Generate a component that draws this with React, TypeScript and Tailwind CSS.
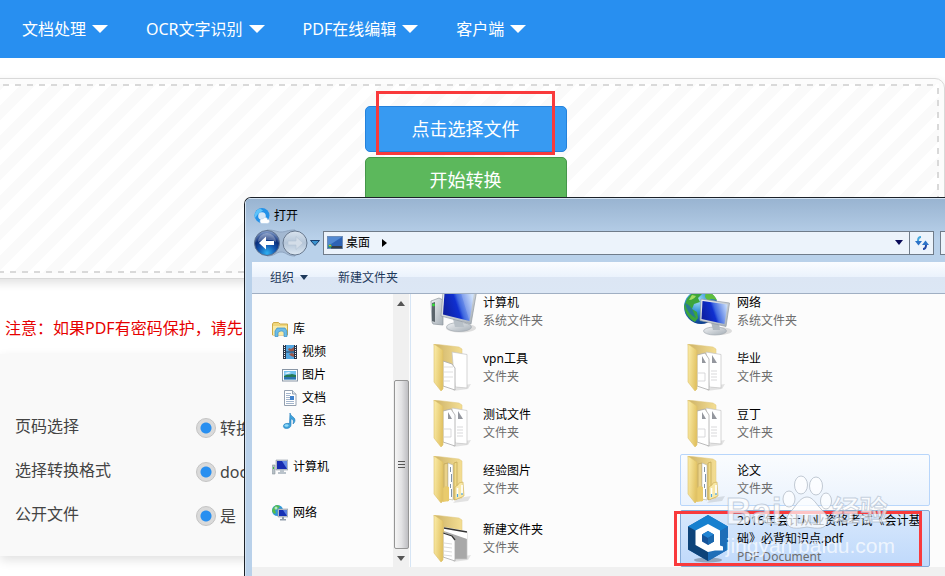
import React, { ReactNode } from "react";

const navItems = ["文档处理", "OCR文字识别", "PDF在线编辑", "客户端"];

const options = [
  { name: "pages", label: "页码选择", value: "转换" },
  { name: "format", label: "选择转换格式", value: "doc" },
  { name: "public", label: "公开文件", value: "是" },
];

function Caret() {
  return (
    <svg width="16" height="8" viewBox="0 0 16 8" aria-hidden="true">
      <path d="M0 0h16L8 8z" fill="#fff" />
    </svg>
  );
}

function SmallCaret({ color }: { color: string }) {
  return (
    <svg width="8" height="5" viewBox="0 0 8 5" aria-hidden="true">
      <path d="M0 0h8L4 5z" fill={color} />
    </svg>
  );
}

function BrowserIcon() {
  return (
    <svg width="16" height="16" viewBox="0 0 16 16" aria-hidden="true">
      <circle cx="8" cy="7.5" r="7.5" fill="#2492e8" />
      <path d="M1 10a7.5 7.5 0 0 1 5-9.500l3 2L4 6z" fill="#5dc3fa" />
      <circle cx="8" cy="8" r="3.800" fill="#d5e6f6" />
      <path d="M6 13c0-2 2-2.500 3-2 .5-2 4.500-2 4.500.5 2 0 2.500 1.500 2 2.500s-1.500 1.500-3 1.500H8c-1.500 0-2-1-2-2.500z" fill="#fff" stroke="#a9c9e8" strokeWidth=".5" />
    </svg>
  );
}

function BackForward() {
  return (
    <svg width="56" height="28" viewBox="0 0 56 28" aria-hidden="true">
      <defs>
        <radialGradient id="back" cx=".5" cy=".9" r=".9">
          <stop offset="0" stopColor="#2fb2f2" />
          <stop offset=".4" stopColor="#1354ad" />
          <stop offset=".65" stopColor="#0b2d78" />
          <stop offset="1" stopColor="#8fa9d3" />
        </radialGradient>
        <linearGradient id="fwd" x1="0" y1="0" x2="0" y2="1">
          <stop offset="0" stopColor="#d9e3ee" />
          <stop offset=".5" stopColor="#b4c5d8" />
          <stop offset="1" stopColor="#dde8f2" />
        </linearGradient>
      </defs>
      <path d="M14 1c9 0 9 2 14 2s6-2 14-2v26c-8 0-9-4-14-4s-6 4-14 4z" fill="#a3b8d1" stroke="#8fa5c0" />
      <circle cx="14" cy="14" r="12.500" fill="url(#back)" stroke="#5d708c" />
      <path d="M5 13a9 9 0 0 1 18 0c-4-3-14-3-18 0z" fill="#fff" opacity=".3" />
      <path d="M6 14l7-6.500v4.500h8v4h-8v4.500z" fill="#fff" />
      <circle cx="42" cy="14" r="12" fill="url(#fwd)" stroke="#66778d" />
      <path d="M50 14l-7-6.500v4.500h-8v4h8v4.500z" fill="#d3dde8" stroke="#b3c2d3" strokeWidth=".6" />
    </svg>
  );
}

function DesktopIcon() {
  return (
    <svg width="16" height="13" viewBox="0 0 16 13" aria-hidden="true">
      <rect x=".5" y=".5" width="15" height="12" fill="#2d62b4" stroke="#6c8db9" />
      <path d="M1 1h14L1 10z" fill="#5289d2" />
      <path d="M4 10h11v2.500H4z" fill="#333d49" />
      <circle cx="3" cy="10" r="1.800" fill="#39b35b" />
      <path d="M2 9h2v1H2z" fill="#ee9d34" />
    </svg>
  );
}

function RefreshIcon() {
  return (
    <svg width="14" height="14" viewBox="0 0 14 14" aria-hidden="true">
      <path d="M6 1C4 1 3 2.500 3 5" fill="none" stroke="#43a7de" strokeWidth="2" />
      <path d="M0 5h7L3.500 9.500z" fill="#2c73c8" />
      <path d="M8 13c2 0 3-1.500 3-4" fill="none" stroke="#2447a5" strokeWidth="2" />
      <path d="M7 9h7l-3.500-4.500z" fill="#2c73c8" />
    </svg>
  );
}

function LibraryIcon() {
  return (
    <svg width="16" height="16" viewBox="0 0 16 16" aria-hidden="true">
      <path d="M.5 14V3l1-1.500h5L8 3h7.500v11z" fill="#efd67b" stroke="#cfab48" />
      <path d="M1 5h14v9H1z" fill="#f8eaa6" />
      <path d="M3 15.500V10l2-3h8l2 3v5.500h-3V12c0-1-1-2-2.500-2S6 11 6 12v3.500z" fill="#6cbce7" stroke="#398fc5" strokeWidth=".7" />
    </svg>
  );
}

function VideoIcon() {
  return (
    <svg width="16" height="16" viewBox="0 0 16 16" aria-hidden="true">
      <rect x="1" y="1" width="14" height="14" fill="#293447" />
      <rect x="4" y="1" width="8" height="14" fill="#53a7e2" />
      <path d="M7 4l2 1 3-2v4L9 7.500 6 6zM7 10l3-1 2 1v3l-3-1z" fill="#9c5546" />
      <path d="M4 8h8" stroke="#263b59" />
      <path d="M2.500 1v14M13.500 1v14" stroke="#f1f5f8" strokeDasharray="1 1" />
    </svg>
  );
}

function PictureIcon() {
  return (
    <svg width="16" height="16" viewBox="0 0 16 16" aria-hidden="true">
      <rect x=".5" y="2.500" width="15" height="11.500" fill="#fff" stroke="#8996a5" />
      <rect x="2" y="4" width="12" height="8.500" fill="#73c3f0" />
      <path d="M2 9c3-2 5-1 8-2l4 1v2H2z" fill="#267a53" />
      <path d="M2 10h12v2.500H2z" fill="#2c75af" />
      <path d="M2 6l5-1 2 1-4 1z" fill="#e6f5ff" />
    </svg>
  );
}

function DocumentIcon() {
  return (
    <svg width="16" height="16" viewBox="0 0 16 16" aria-hidden="true">
      <path d="M2.500.5h8l3.500 3.500v11.500H2.500z" fill="#fff" stroke="#94a0b0" />
      <path d="M10.500.5V4H14" fill="#dde7ef" stroke="#94a0b0" />
      <path d="M4 3.500h5M4 5.500h4M4 7.500h4M4 9.500h4M4 11.500h8M4 13.500h8" stroke="#a3b5cc" />
      <rect x="8" y="6" width="4" height="4" fill="#3f80cb" />
    </svg>
  );
}

function MusicIcon() {
  return (
    <svg width="16" height="16" viewBox="0 0 16 16" aria-hidden="true">
      <path d="M8 0c0 3 5 4 5 7 0 2-1 3-2 4 1-4-.5-5-2-5v6c0 2-2 3.500-4.500 3.500S1 14 1.500 12.500 4 10 7.500 10.500z" fill="#3fa3dc" stroke="#1f78b8" strokeWidth=".6" />
      <ellipse cx="4.500" cy="12.500" rx="2" ry="1.300" fill="#96dcf8" />
    </svg>
  );
}

function MiniComputer() {
  return (
    <svg width="16" height="16" viewBox="0 0 16 16" aria-hidden="true">
      <path d="M.3 6h2.700v9H.3z" fill="#b7c1c7" stroke="#89949c" strokeWidth=".6" />
      <path d="M1 8h1v2H1z" fill="#38c43c" />
      <path d="M4 1h12v10H4z" fill="#c0c8d0" stroke="#8d98a4" strokeWidth=".6" />
      <path d="M5 2h10v8H5z" fill="#172bb0" />
      <path d="M10 2h5v8z" fill="#6389e6" />
      <path d="M8 11h4v2h2v2H6v-2h2z" fill="#bac3cb" />
    </svg>
  );
}

function MiniNetwork() {
  return (
    <svg width="16" height="16" viewBox="0 0 16 16" aria-hidden="true">
      <circle cx="5.500" cy="5.500" r="5.500" fill="#3098da" />
      <path d="M1 3l3-3 4 1-2 3-3 1 1 3-2 1-2-3z" fill="#55bd4c" />
      <circle cx="4" cy="3" r="1.500" fill="#cceef0" opacity=".8" />
      <path d="M6 4h10v8H6z" fill="#c0c8d0" stroke="#8d98a4" strokeWidth=".6" />
      <path d="M7 5h8v6H7z" fill="#1731b5" />
      <path d="M11 5h4v6z" fill="#5c82e0" />
      <path d="M10 12h2v2h2v1.500H8V14h2z" fill="#929eab" />
    </svg>
  );
}

function Defs() {
  return (
    <svg width="0" height="0" className="absolute" aria-hidden="true">
      <defs>
        <linearGradient id="flap" x1="0" y1="0" x2="1" y2=".3">
          <stop offset="0" stopColor="#fbedaa" />
          <stop offset="1" stopColor="#e3c465" />
        </linearGradient>
        <linearGradient id="backFlap" x1="0" y1="0" x2="1" y2="0">
          <stop offset="0" stopColor="#cdb268" />
          <stop offset="1" stopColor="#f4de93" />
        </linearGradient>
        <linearGradient id="screen" x1="0" y1=".6" x2="1" y2=".3">
          <stop offset="0" stopColor="#0e1fa0" />
          <stop offset=".45" stopColor="#0f2fd0" />
          <stop offset=".55" stopColor="#3f68e0" />
          <stop offset="1" stopColor="#c6dcfa" />
        </linearGradient>
        <linearGradient id="metal" x1="0" y1="0" x2="1" y2="1">
          <stop offset="0" stopColor="#f1f3f5" />
          <stop offset="1" stopColor="#a5aeb6" />
        </linearGradient>
        <radialGradient id="globe" cx=".4" cy=".3" r=".7">
          <stop offset="0" stopColor="#a9e4f8" />
          <stop offset=".5" stopColor="#2f8fd6" />
          <stop offset="1" stopColor="#0b3c8c" />
        </radialGradient>
      </defs>
    </svg>
  );
}

function ComputerIcon() {
  return (
    <svg width="48" height="48" viewBox="0 0 48 48" aria-hidden="true">
      <path d="M1 13l8-3 4 2v25l-10-1-1-2z" fill="url(#metal)" stroke="#8c959c" strokeWidth=".7" />
      <path d="M2 15l3-1v20l-3-1z" fill="#5b646b" />
      <circle cx="3.500" cy="17" r="1.400" fill="#35e03a" />
      <ellipse cx="31" cy="40" rx="15" ry="4.500" fill="#000" opacity=".12" />
      <ellipse cx="29" cy="39" rx="12.500" ry="4.500" fill="url(#metal)" stroke="#a3abb2" strokeWidth=".7" />
      <path d="M23 31h9l2 8h-9z" fill="#b8c0c7" />
      <path d="M13 4h33.500L41 36l-30-8z" fill="url(#metal)" stroke="#9099a2" strokeWidth=".7" />
      <path d="M14.500 5H44l-4.500 28L13 26.500z" fill="url(#screen)" />
      <path d="M31 5h13l-4.500 28z" fill="#fff" opacity=".15" />
    </svg>
  );
}

function NetworkIcon() {
  return (
    <svg width="48" height="48" viewBox="0 0 48 48" aria-hidden="true">
      <circle cx="17" cy="19" r="17" fill="url(#globe)" />
      <path d="M3 11c3-5 8-8 12-9l3 4-4 4 2 4-6 2-2 5 5 3 1 6-3 4C5 31 1 25 0 18z" fill="#3ca53c" />
      <path d="M22 3c5 1 9 5 11 9l-6-1-3 2-3-4z" fill="#5ebd3e" />
      <path d="M5 12c3 0 6-2 7-4l-4-1z" fill="#a5dd62" />
      <path d="M1 15c3 1 5 3 7 6s2 6 4 9c-5-2-10-8-11-15z" fill="#1f66b8" opacity=".7" />
      <ellipse cx="35" cy="43" rx="13" ry="4" fill="#000" opacity=".12" />
      <ellipse cx="31" cy="43" rx="11.500" ry="4" fill="url(#metal)" stroke="#a3abb2" strokeWidth=".7" />
      <path d="M27 34h8l1 8h-7z" fill="#aeb7bf" />
      <path d="M17 11l28.500 4L42 38.500l-26-6z" fill="url(#metal)" stroke="#9099a2" strokeWidth=".7" />
      <path d="M18.500 13l25 3.500L40.500 36l-23-5z" fill="url(#screen)" />
    </svg>
  );
}

type FolderKind = "plain" | "docs" | "nested" | "window";

function FolderIcon({ kind }: { kind: FolderKind }) {
  return (
    <svg width="48" height="48" viewBox="0 0 48 48" aria-hidden="true">
      <path d="M28 42l13-2-3 5-15 2z" fill="#000" opacity=".1" />
      <path d={kind === "nested" ? "M4 0l25 3 3 2v37l-19 2z" : "M4 0l25 3 3 2v12l-19 24z"} fill="url(#backFlap)" stroke="#dfc67c" strokeWidth=".5" />
      {kind === "nested" ? (
        <>
          <path d="M14 8l4-1v38l-4-2z" fill="#ead28a" stroke="#b79a4c" strokeWidth=".6" />
          <path d="M18 7l5 2v35l-5-1z" fill="#fff" stroke="#b5b5a8" strokeWidth=".6" />
          <path d="M20.500 11v5M21.500 18v8M20.500 28v4M21.500 33v8" stroke="#7f93a8" strokeWidth="1" />
          <path d="M24 7l3-1v37l-3 1z" fill="#f0d985" stroke="#b79a4c" strokeWidth=".6" />
          <path d="M25 31l3-2 1-2 4-1 1 14-9 4z" fill="#f8e8a7" stroke="#cbac54" strokeWidth=".6" />
          <path d="M27.500 32v9M32 29v9" stroke="#fff" strokeWidth="1.600" />
          <path d="M27.500 38v3M32 37v2" stroke="#4ba5df" strokeWidth="1.200" />
          <path d="M13 32l3-2 3 1v14l-6 1z" fill="#e9cb6c" />
        </>
      ) : (
        <>
          <path d={kind === "window" ? "M14 13l23 4v27H24z" : "M22 8l15 2.500V44l-12-1z"} fill={kind === "window" ? "#a8a8a8" : "#fff"} stroke="#c3c3c3" strokeWidth=".7" />
          {kind === "window" && <path d="M14 12l23 4v8l-23-8z" fill="#fff" />}
          {kind === "window" && <path d="M14 13l23 4" stroke="#333" strokeWidth="1.300" />}
          <path d={kind === "docs" ? "M13 11l8-2 4 6v31l-12-4z" : "M13 17l9 3 3 4v22l-12-4z"} fill="#fff" stroke="#a8a8a8" strokeWidth=".8" />
          {kind === "docs" && (
            <>
              <path d="M18 12l4 7h-4zM28 11l5 8h-5z" fill="#94979e" />
              <path d="M14 29h7v8h-7M27 27h6M27 30h6M27 33h6M27 36h6" fill="none" stroke="#cfcfd2" strokeWidth=".8" />
            </>
          )}
          {kind === "plain" && <path d="M14 23h9M14 28h9M14 33h9M14 37h6" stroke="#d7d7d7" strokeWidth=".8" />}
          {kind === "window" && (
            <>
              <path d="M13 18l9 3 3 4" fill="none" stroke="#333" strokeWidth="1.300" />
              <path d="M14 28l8 1M14 32l8 1M14 36l8 1M14 40l8 1" stroke="#d0d0d0" strokeWidth=".8" />
            </>
          )}
        </>
      )}
      <path d="M4 0l9 6v39l-2 2-7-9z" fill="url(#flap)" stroke="#dcbf68" strokeWidth=".6" />
    </svg>
  );
}

function PdfIcon() {
  return (
    <svg width="48" height="48" viewBox="0 0 48 48" aria-hidden="true">
      <ellipse cx="24" cy="45" rx="14" ry="2.500" fill="#000" opacity=".25" />
      <path d="M24 0l20 11.500v23L24 46 4 34.500v-23z" fill="#1c6db5" />
      <path d="M24 0l20 11.500-9 5L24 10l-11 6.500-9-5z" fill="#1680cf" />
      <path d="M4 11.500l9 5V30l11 7v9L4 34.500z" fill="#0e4379" />
      <path d="M44 11.500v23L24 46v-9l12-7V16.500z" fill="#1f6eb8" />
      <path d="M24 9l12 6.500v15l3 1v4h-8L24 37l-12.500-7V15.500z" fill="#fff" />
      <path d="M24 16l6 3.500v7L24 30l-6-3.500v-7z" fill="#15539a" />
      <path d="M24 16l6 3.500-6 3.500-6-3.500z" fill="#2385d4" />
      <path d="M24 23l6-3.500v7L24 30z" fill="#1a68ae" />
    </svg>
  );
}

type FileItem = { name: string; sub: string; icon: ReactNode; state?: "hover" | "selected" };

const files: FileItem[] = [
  { name: "计算机", sub: "系统文件夹", icon: <ComputerIcon /> },
  { name: "网络", sub: "系统文件夹", icon: <NetworkIcon /> },
  { name: "vpn工具", sub: "文件夹", icon: <FolderIcon kind="plain" /> },
  { name: "毕业", sub: "文件夹", icon: <FolderIcon kind="docs" /> },
  { name: "测试文件", sub: "文件夹", icon: <FolderIcon kind="docs" /> },
  { name: "豆丁", sub: "文件夹", icon: <FolderIcon kind="docs" /> },
  { name: "经验图片", sub: "文件夹", icon: <FolderIcon kind="nested" /> },
  { name: "论文", sub: "文件夹", icon: <FolderIcon kind="nested" />, state: "hover" },
  { name: "新建文件夹", sub: "文件夹", icon: <FolderIcon kind="window" /> },
  { name: "2016年会计从业资格考试《会计基础》必背知识点.pdf", sub: "PDF Document", icon: <PdfIcon />, state: "selected" },
];

const cellStyles = {
  none: "border-transparent",
  hover: "border-[#b8d6fb] bg-linear-to-b from-[#fafcfe] to-[#ebf3fd]",
  selected: "border-[#84a9d6] bg-linear-to-b from-[#d8e8fc] to-[#bfd9fb]",
};

const places = [
  { name: "视频", icon: <VideoIcon /> },
  { name: "图片", icon: <PictureIcon /> },
  { name: "文档", icon: <DocumentIcon /> },
  { name: "音乐", icon: <MusicIcon /> },
];

function Sidebar() {
  return (
    <nav className="w-[141px] shrink-0 pt-[23px] pl-5">
      <button className="flex h-[23px] items-center gap-[5px]"><LibraryIcon />库</button>
      <ul className="pl-[10px]">
        {places.map((p) => (
          <li key={p.name}>
            <button className="flex h-[23px] items-center gap-1">{p.icon}{p.name}</button>
          </li>
        ))}
      </ul>
      <button className="mt-[23px] flex h-[23px] items-center gap-[5px]"><MiniComputer />计算机</button>
      <button className="mt-[23px] flex h-[23px] items-center gap-[5px]"><MiniNetwork />网络</button>
    </nav>
  );
}

function Scrollbar() {
  return (
    <div className="flex w-4 shrink-0 flex-col items-center bg-[#f0f0f0]">
      <div className="flex h-[18px] items-center"><span className="rotate-180"><SmallCaret color="#555" /></span></div>
      <div className="mt-auto flex h-[169px] w-[15px] flex-col items-center justify-center gap-[2px] rounded-[2px] border border-[#959595] bg-linear-to-r from-[#f5f5f5] via-[#e2e2e4] to-[#bebec2]">
        <i className="h-px w-[7px] bg-[#555]" />
        <i className="h-px w-[7px] bg-[#555]" />
        <i className="h-px w-[7px] bg-[#555]" />
      </div>
      <div className="flex h-[18px] items-center"><SmallCaret color="#555" /></div>
    </div>
  );
}

function OpenDialog() {
  return (
    <section
      role="dialog"
      aria-label="打开"
      className="absolute top-[197px] right-0 bottom-0 left-[244px] flex flex-col overflow-hidden rounded-tl-[7px] border-t border-l border-[#1c2229] bg-[#b9d1ea] text-xs leading-[18px] text-black"
    >
      <div className="flex flex-1 flex-col border-t border-l border-[#d5e4f3] bg-[linear-gradient(#99b4d1,#b9d1ea_40px)] pl-[6px]">
        <header className="flex h-[30px] items-center gap-1 pt-[3px] pl-[2px]">
          <BrowserIcon />
          <h2>打开</h2>
        </header>
        <div className="flex h-[33px] items-center pb-[6px] pl-px">
          <button aria-label="后退和前进"><BackForward /></button>
          <button aria-label="最近的位置" className="mr-[3px] ml-px">
            <svg width="10" height="6" viewBox="0 0 10 6"><path d="M.5.5h9L5 5.500z" fill="#3a93cf" stroke="#173c6b" /></svg>
          </button>
          <div className="flex h-6 flex-1 items-center border border-[#707c8a] bg-[#ecf3fb] pl-[3px]">
            <DesktopIcon />
            <button className="ml-[3px]">桌面</button>
            <svg className="ml-3" width="5" height="8" viewBox="0 0 5 8"><path d="M0 0l5 4-5 4z" fill="#000" /></svg>
            <button aria-label="历史路径" className="mr-[6px] ml-auto"><SmallCaret color="#0a0a58" /></button>
            <button aria-label="刷新" className="flex h-full w-6 items-center justify-center border-l border-[#707c8a]"><RefreshIcon /></button>
          </div>
          <div className="ml-[6px] h-6 w-[5px] border border-r-0 border-[#707c8a] bg-[#ecf3fb]" />
        </div>
        <div className="flex h-8 items-center gap-[30px] border-b border-[#a0afc3] bg-[linear-gradient(#fafcff,#eaf2fc_50%,#dce6f4_50%,#dce7f5)] pl-[18px] text-[#1e395b]">
          <button className="flex items-center gap-[6px]">组织<SmallCaret color="#1e395b" /></button>
          <button>新建文件夹</button>
        </div>
        <div className="flex overflow-hidden bg-[#fcfcfc]">
          <Sidebar />
          <Scrollbar />
          <div className="ml-px flex-1 border-l border-[#d6e5f5] pl-[15px]">
            <ul className="-mt-2 grid grid-cols-[250px_250px] grid-rows-[52px_52px_52px_52px_57px] gap-1">
              {files.map((f) => (
                <li key={f.name} className={`relative flex items-center gap-[5px] rounded-[2px] border pl-[3px] ${cellStyles[f.state ?? "none"]}`}>
                  <span className="shrink-0">{f.icon}</span>
                  <div>
                    <p>{f.name}</p>
                    <p className="text-[#6d6d6d]">{f.sub}</p>
                  </div>
                  {f.state === "selected" && <span className="absolute top-0 right-[7px] bottom-0 -left-[7px] border-3 border-[#f93a3c]" />}
                </li>
              ))}
            </ul>
          </div>
        </div>
        <div className="flex-1 bg-[#f0f0f0]" />
      </div>
    </section>
  );
}

function Watermark() {
  return (
    <div className="pointer-events-none absolute top-[472px] right-[50px] font-['Liberation_Sans','Noto_Sans_CJK_SC',sans-serif] text-white/70">
      <div className="flex h-[58px] items-end leading-9 [-webkit-text-stroke:1px_rgba(165,180,200,0.6)]">
        <span className="text-4xl leading-9 font-bold">Bai</span>
        <svg width="50" height="56" viewBox="0 0 50 56" fill="#fff" fillOpacity=".7" stroke="#a9b3c0" strokeOpacity=".7" aria-hidden="true">
          <ellipse cx="7" cy="25" rx="6" ry="8" />
          <ellipse cx="19" cy="11" rx="6.500" ry="9" />
          <ellipse cx="34" cy="12" rx="6.500" ry="9" />
          <ellipse cx="44" cy="27" rx="5.500" ry="8" />
          <path d="M25 23c6 0 9 7 14 12s8 8 6 14-9 6-20 4c-11 2-18 2-20-4s2-9 6-14 8-12 14-12zM16 41v8h6v-8M28 41v8h8v-8" />
        </svg>
        <span className="text-[28px] font-bold">经验</span>
      </div>
      <p className="text-[21px] leading-8">jingyan.baidu.com</p>
    </div>
  );
}

function DropOutline() {
  return (
    <svg className="pointer-events-none absolute inset-0 size-full" fill="none" stroke="#d9d9d9" strokeWidth="4" strokeDasharray="6 6" aria-hidden="true">
      <line x1="0" y1="0" x2="100%" y2="0" strokeDashoffset="1" />
      <line x1="100%" y1="0" x2="100%" y2="100%" strokeDashoffset="8" />
      <line x1="0" y1="100%" x2="100%" y2="100%" strokeDashoffset="6" />
      <line x1="0" y1="0" x2="0" y2="100%" strokeDashoffset="8" />
    </svg>
  );
}

export default function App() {
  return (
    <div className="relative min-h-screen overflow-hidden bg-white font-['Noto_Sans','Noto_Sans_CJK_SC',sans-serif] text-base text-[#444]">
      <Defs />
      <header className="flex h-[58px] items-center bg-[#288ff0] pb-px pl-[22px] text-white">
        <nav className="flex gap-[38px]">
          {navItems.map((item) => (
            <button key={item} className="flex items-center gap-[6px]">{item}<Caret /></button>
          ))}
        </nav>
      </header>

      <main>
        <div className="mt-5 -ml-[14px] rounded-[10px] border border-[#d9d9d9] bg-[#fcfcfc] p-[5px] shadow-[0_4px_10px_rgba(0,0,0,0.12)]">
          <div className="relative flex h-[189px] flex-col items-center gap-[5px] bg-[linear-gradient(135deg,#fafafa_25%,#fff_25%,#fff_50%,#fafafa_50%,#fafafa_75%,#fff_75%)] bg-[length:30px_30px] pt-[22px] text-lg text-white">
            <DropOutline />
            <div className="relative">
              <button className="h-[46px] w-[202px] rounded-[5px] border border-[#2482dc] bg-[#379af2]">点击选择文件</button>
              <span className="pointer-events-none absolute -top-[15px] right-3 -bottom-[3px] left-[11px] border-3 border-[#f93a3c]" />
            </div>
            <button className="h-[46px] w-[202px] rounded-[5px] border border-[#45964a] bg-[#5cb85c]">开始转换</button>
          </div>
        </div>

        <p className="flex h-[75px] items-center pt-[22px] pl-[5px] text-[#e60000]">注意：如果PDF有密码保护，请先</p>

        <form className="flex flex-col gap-5 bg-[#f9f9f9] pt-[58px] pb-8 pl-[15px] shadow-[0_4px_10px_rgba(0,0,0,0.12)]">
          {options.map((o) => (
            <fieldset key={o.name} className="flex h-6 items-center">
              <legend className="float-left w-[181px]">{o.label}</legend>
              <label className="flex items-center gap-1 pt-1">
                <input
                  type="radio"
                  name={o.name}
                  defaultChecked
                  className="size-5 appearance-none rounded-full border border-[#c4c4c4] bg-[radial-gradient(circle,#288ff0_5px,#dadada_6px)]"
                />
                {o.value}
              </label>
            </fieldset>
          ))}
        </form>
      </main>

      <OpenDialog />
      <Watermark />
    </div>
  );
}
